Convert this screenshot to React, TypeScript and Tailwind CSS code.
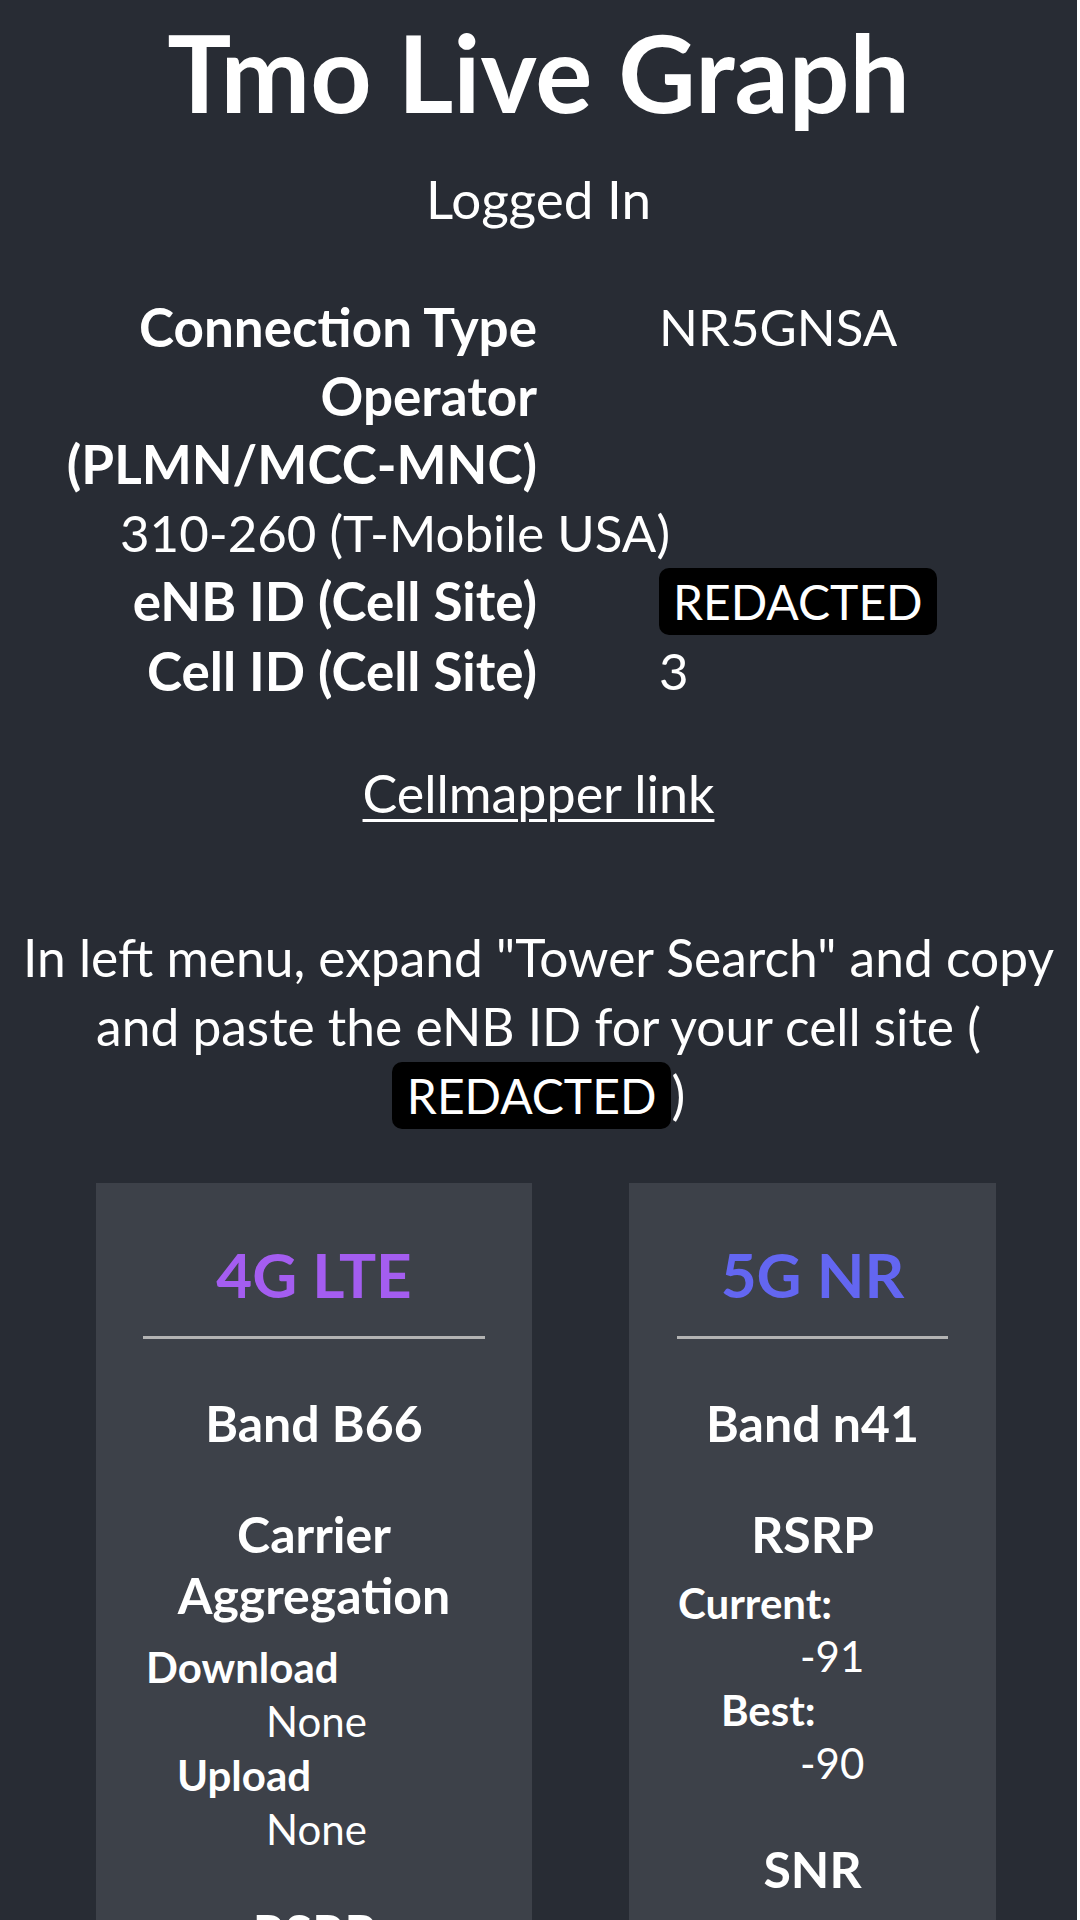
import type { ReactNode } from 'react';

function Row({ label, children }: { label: ReactNode; children?: ReactNode }) {
  return (
    <div className="flex">
      <div className="w-[537px] shrink-0 text-right text-[53px] font-bold">{label}</div>
      <div className="ml-[122px]">{children}</div>
    </div>
  );
}

function Redacted({ className }: { className: string }) {
  return <span className={`rounded-[10px] bg-black py-[5px] text-[48px] ${className}`}>REDACTED</span>;
}

function Stat({ term, value, termPad, leading }: { term: string; value: string; termPad: string; leading: string }) {
  return (
    <div className={`text-[42px] ${leading}`}>
      <div className={`font-bold ${termPad}`}>{term}</div>
      <div className="pl-[123px]">{value}</div>
    </div>
  );
}

export default function App() {
  return (
    <div className="h-[1920px] overflow-hidden bg-white">
      <div className="h-[1920px] w-[1077px] bg-[#282c34] text-white font-['Lato','Open_Sans',sans-serif]">
        <h1 className="text-center text-[107px] font-bold leading-[144px]">Tmo Live Graph</h1>
        <p className="mt-[21px] text-center text-[53px] leading-[68px]">Logged In</p>

        <div className="mt-[60px] text-[51px] leading-[68.6px]">
          <Row label="Connection Type">NR5GNSA</Row>
          <Row label={<>Operator<br />(PLMN/MCC-MNC)</>} />
          <div className="pl-[120px]">310-260 (T-Mobile USA)</div>
          <Row label="eNB ID (Cell Site)">
            <Redacted className="px-[14px]" />
          </Row>
          <Row label="Cell ID (Cell Site)">3</Row>
        </div>

        <p className="mt-[53px] text-center text-[52px] leading-[68.6px]">
          <a className="underline decoration-[3px] underline-offset-[6px]">Cellmapper link</a>
        </p>

        <p className="mt-[96px] px-[10px] text-center text-[51.5px] leading-[68.6px]">
          In left menu, expand "Tower Search" and copy
          <br />
          and paste the eNB ID for your cell site (
          <br />
          <Redacted className="px-[15px]" />)
        </p>

        <div className="mt-[52px] flex items-start gap-[97px] pl-[96px]">
          <div className="w-[436px] bg-[#3d4149] px-[47px] pt-[54px] pb-[60px]">
            <h2 className="text-center text-[62px] font-bold leading-[74px] text-[#a45df0]">4G LTE</h2>
            <div className="mt-[25px] h-[3px] bg-[#b3b3b3]" />
            <h3 className="mt-[54px] text-center text-[50px] font-bold leading-[60px]">Band B66</h3>
            <h3 className="mt-[51px] text-center text-[50px] font-bold leading-[61px]">Carrier Aggregation</h3>
            <div className="mt-[14px]">
              <Stat term="Download" value="None" termPad="pl-[3px]" leading="leading-[54px]" />
              <Stat term="Upload" value="None" termPad="pl-[34px]" leading="leading-[54px]" />
            </div>
            <h3 className="mt-[46px] text-center text-[50px] font-bold leading-[61px]">RSRP</h3>
            <div className="mt-[14px]">
              <Stat term="Current:" value="-101" termPad="pl-[1px]" leading="leading-[54px]" />
              <Stat term="Best:" value="-99" termPad="pl-[44px]" leading="leading-[54px]" />
            </div>
          </div>

          <div className="w-[367px] bg-[#3d4149] px-[48px] pt-[54px] pb-[60px]">
            <h2 className="text-center text-[62px] font-bold leading-[74px] text-[#6366f1]">5G NR</h2>
            <div className="mt-[25px] h-[3px] bg-[#b3b3b3]" />
            <h3 className="mt-[54px] text-center text-[50px] font-bold leading-[60px]">Band n41</h3>
            <h3 className="mt-[51px] text-center text-[50px] font-bold leading-[61px]">RSRP</h3>
            <div className="mt-[12px]">
              <Stat term="Current:" value="-91" termPad="pl-[1px]" leading="leading-[53.5px]" />
              <Stat term="Best:" value="-90" termPad="pl-[44px]" leading="leading-[53.5px]" />
            </div>
            <h3 className="mt-[48px] text-center text-[50px] font-bold leading-[61px]">SNR</h3>
            <div className="mt-[12px]">
              <Stat term="Current:" value="12" termPad="pl-[1px]" leading="leading-[53.5px]" />
              <Stat term="Best:" value="14" termPad="pl-[44px]" leading="leading-[53.5px]" />
            </div>
          </div>
        </div>
      </div>
    </div>
  );
}
